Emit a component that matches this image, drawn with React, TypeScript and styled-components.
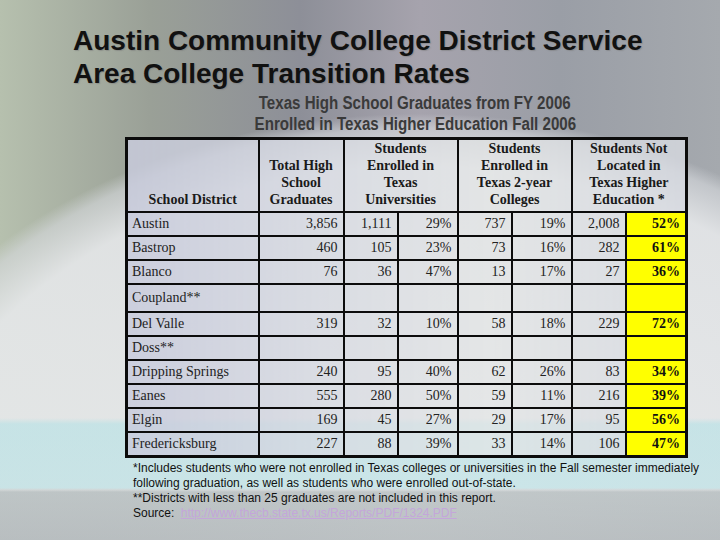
import React from "react";
import styled, { createGlobalStyle } from "styled-components";

const Global = createGlobalStyle`
  html, body { margin: 0; padding: 0; }
  body { width: 720px; height: 540px; overflow: hidden; }
`;

const Slide = styled.div`
  position: relative;
  width: 720px;
  height: 540px;
  overflow: hidden;
  box-sizing: border-box;
  padding-top: 24px;
  font-family: "Liberation Sans", Arial, sans-serif;
  background:
    linear-gradient(180deg, rgba(0,0,0,0) 0px, rgba(0,0,0,0) 488px, rgba(120,135,138,0.35) 492px, rgba(120,130,135,0.4) 540px),
    linear-gradient(180deg, rgba(0,0,0,0) 0px, rgba(0,0,0,0) 418px, rgba(175,225,230,0.55) 424px, rgba(175,225,230,0.5) 488px, rgba(0,0,0,0) 490px),
    radial-gradient(ellipse 640px 480px at 420px 560px, rgba(238,240,240,0.95) 0%, rgba(230,232,234,0.9) 82%, rgba(215,218,222,0.6) 90%, rgba(0,0,0,0) 93%),
    linear-gradient(90deg, #b6c0ae 0px, #9aa097 150px, #8d8f98 300px, #a6a3ad 420px, #9a9ea6 560px, #a5a9ae 720px);
`;

const Title = styled.h1`
  margin: 0 0 0 73px;
  font-family: "Liberation Sans", Arial, sans-serif;
  font-weight: bold;
  font-size: 28px;
  line-height: 33px;
  color: #111;
  text-shadow: 1px 1px 1px rgba(120,120,120,0.5);
`;

const Subtitle = styled.div`
  margin-top: 3px;
  padding-left: 110px;
  text-align: center;
  font-family: "Liberation Sans", Arial, sans-serif;
  font-weight: bold;
  font-size: 18px;
  line-height: 21px;
  color: #3a3a3a;
`;

const SubLine = styled.span`
  display: inline-block;
  transform: scaleX(0.84);
  transform-origin: center;
  white-space: nowrap;
`;

const Table = styled.table`
  margin: 2px 0 0 125px;
  width: 560px;
  border-collapse: collapse;
  table-layout: fixed;
  border: 3px solid #0c0c0c;
  font-family: "Liberation Serif", "Times New Roman", serif;
  font-size: 14px;
  color: #222;
  background: linear-gradient(90deg, rgba(200,203,220,0.85) 0%, rgba(215,218,226,0.75) 35%, rgba(228,230,230,0.7) 65%, rgba(215,218,225,0.8) 100%);
`;

const Th = styled.th`
  border: 2px solid #0c0c0c;
  height: 66px;
  padding: 0 4px 3px;
  vertical-align: bottom;
  text-align: center;
  font-weight: bold;
  font-size: 14px;
  line-height: 17px;
  color: #1a1a1a;
`;

const Tr = styled.tr<{ $tall?: boolean }>`
  height: ${(p) => (p.$tall ? "28px" : "24px")};
`;

const Td = styled.td<{ $num?: boolean; $hi?: boolean }>`
  border: 2px solid #0c0c0c;
  padding: 0 ${(p) => (p.$num ? "5px" : "4px")} 0 4px;
  text-align: ${(p) => (p.$num ? "right" : "left")};
  vertical-align: middle;
  white-space: nowrap;
  line-height: 18px;
  background: ${(p) => (p.$hi ? "#ffff00" : "transparent")};
  font-weight: ${(p) => (p.$hi ? "bold" : "normal")};
  color: ${(p) => (p.$hi ? "#111" : "#222")};
`;

const Notes = styled.div`
  margin: 3px 0 0 133px;
  width: 590px;
  font-family: "Liberation Sans", Arial, sans-serif;
  font-size: 12px;
  line-height: 15.3px;
  color: #111;
`;

const Link = styled.span`
  margin-left: 3px;
  color: #c4a6da;
  text-decoration: underline;
`;

type Row = { name: string; v?: string[]; tall?: boolean };

const rows: Row[] = [
  { name: "Austin", v: ["3,856", "1,111", "29%", "737", "19%", "2,008", "52%"] },
  { name: "Bastrop", v: ["460", "105", "23%", "73", "16%", "282", "61%"] },
  { name: "Blanco", v: ["76", "36", "47%", "13", "17%", "27", "36%"] },
  { name: "Coupland**", tall: true },
  { name: "Del Valle", v: ["319", "32", "10%", "58", "18%", "229", "72%"] },
  { name: "Doss**" },
  { name: "Dripping Springs", v: ["240", "95", "40%", "62", "26%", "83", "34%"] },
  { name: "Eanes", v: ["555", "280", "50%", "59", "11%", "216", "39%"] },
  { name: "Elgin", v: ["169", "45", "27%", "29", "17%", "95", "56%"] },
  { name: "Fredericksburg", v: ["227", "88", "39%", "33", "14%", "106", "47%"] },
];

const widths = [132, 85, 54, 60, 54, 60, 54, 61];

export default function App() {
  return (
    <Slide>
      <Global />
      <Title>
        Austin Community College District Service
        <br />
        Area College Transition Rates
      </Title>
      <Subtitle>
        <SubLine>Texas High School Graduates from FY 2006</SubLine>
        <br />
        <SubLine>Enrolled in Texas Higher Education Fall 2006</SubLine>
      </Subtitle>
      <Table>
        <colgroup>
          {widths.map((w, i) => (
            <col key={i} style={{ width: w }} />
          ))}
        </colgroup>
        <thead>
          <tr>
            <Th>School District</Th>
            <Th>
              Total High
              <br />
              School
              <br />
              Graduates
            </Th>
            <Th colSpan={2}>
              Students
              <br />
              Enrolled in
              <br />
              Texas
              <br />
              Universities
            </Th>
            <Th colSpan={2}>
              Students
              <br />
              Enrolled in
              <br />
              Texas 2-year
              <br />
              Colleges
            </Th>
            <Th colSpan={2}>
              Students Not
              <br />
              Located in
              <br />
              Texas Higher
              <br />
              Education *
            </Th>
          </tr>
        </thead>
        <tbody>
          {rows.map((r) => (
            <Tr key={r.name} $tall={r.tall}>
              <Td>{r.name}</Td>
              {Array.from({ length: 7 }).map((_, i) => (
                <Td key={i} $num $hi={i === 6}>
                  {r.v ? r.v[i] : ""}
                </Td>
              ))}
            </Tr>
          ))}
        </tbody>
      </Table>
      <Notes>
        *Includes students who were not enrolled in Texas colleges or universities in the Fall semester immediately
        following graduation, as well as students who were enrolled out-of-state.
        <br />
        **Districts with less than 25 graduates are not included in this report.
        <br />
        Source: <Link>http://www.thecb.state.tx.us/Reports/PDF/1324.PDF</Link>
      </Notes>
    </Slide>
  );
}
